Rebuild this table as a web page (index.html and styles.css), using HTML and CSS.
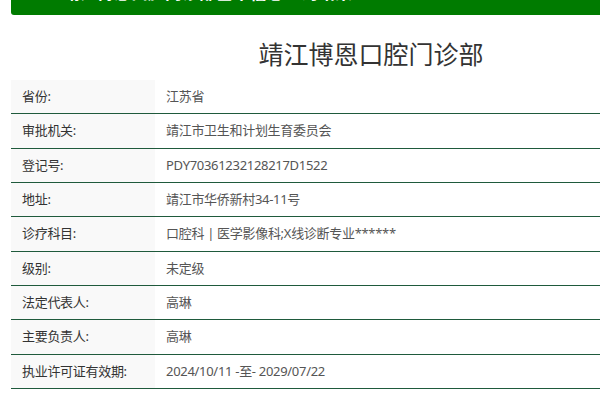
FILE: index.html
```html
<!DOCTYPE html>
<html lang="zh-CN">
<head>
<meta charset="utf-8">
<title>靖江博恩口腔门诊部</title>
<link rel="stylesheet" href="styles.css">
</head>
<body>
<div class="page">
  <div class="topbar"><span class="topbar-text">靖江博恩口腔门诊部基本信息查询结果</span></div>
  <h1 class="title">靖江博恩口腔门诊部</h1>
  <table class="info">
    <tr><td class="lbl">省份:</td><td class="val">江苏省</td></tr>
    <tr><td class="lbl">审批机关:</td><td class="val">靖江市卫生和计划生育委员会</td></tr>
    <tr><td class="lbl">登记号:</td><td class="val">PDY70361232128217D1522</td></tr>
    <tr><td class="lbl">地址:</td><td class="val">靖江市华侨新村34-11号</td></tr>
    <tr><td class="lbl">诊疗科目:</td><td class="val">口腔科 | 医学影像科;X线诊断专业******</td></tr>
    <tr><td class="lbl">级别:</td><td class="val">未定级</td></tr>
    <tr><td class="lbl">法定代表人:</td><td class="val">高琳</td></tr>
    <tr><td class="lbl">主要负责人:</td><td class="val">高琳</td></tr>
    <tr><td class="lbl">执业许可证有效期:</td><td class="val">2024/10/11 -至- 2029/07/22</td></tr>
  </table>
</div>
</body>
</html>
```
FILE: styles.css
```css
html, body {
  margin: 0;
  padding: 0;
  overflow: hidden;
  background: #fff;
}
body {
  font-family: "Noto Sans", "Noto Sans CJK SC", sans-serif;
  color: #333;
}
.page {
  width: 720px;
  margin-left: 11px;
}
.topbar {
  height: 15px;
  background: #007b00;
  border-bottom-left-radius: 3px;
  overflow: hidden;
  padding-left: 52px;
}
.topbar-text {
  display: block;
  margin-top: -16px;
  font-size: 17px;
  line-height: 18px;
  font-weight: bold;
  color: #fff;
  white-space: nowrap;
}
.title {
  margin: 0;
  height: 65px;
  box-sizing: border-box;
  padding-top: 23px;
  text-align: center;
  font-family: "Noto Sans CJK SC", sans-serif;
  font-size: 25px;
  line-height: 30px;
  font-weight: normal;
  color: #333;
}
.info {
  width: 100%;
  border-collapse: collapse;
  font-size: 13px;
  letter-spacing: -0.3px;
}
.info td {
  padding: 7px 11px;
  line-height: 19.33px;
  border-bottom: 1px solid #1f5a3c;
  text-align: left;
  vertical-align: middle;
}
.info .lbl {
  width: 122px;
  background: #f9f9f9;
  color: #333;
}
.info .val {
  color: #555;
}
```
